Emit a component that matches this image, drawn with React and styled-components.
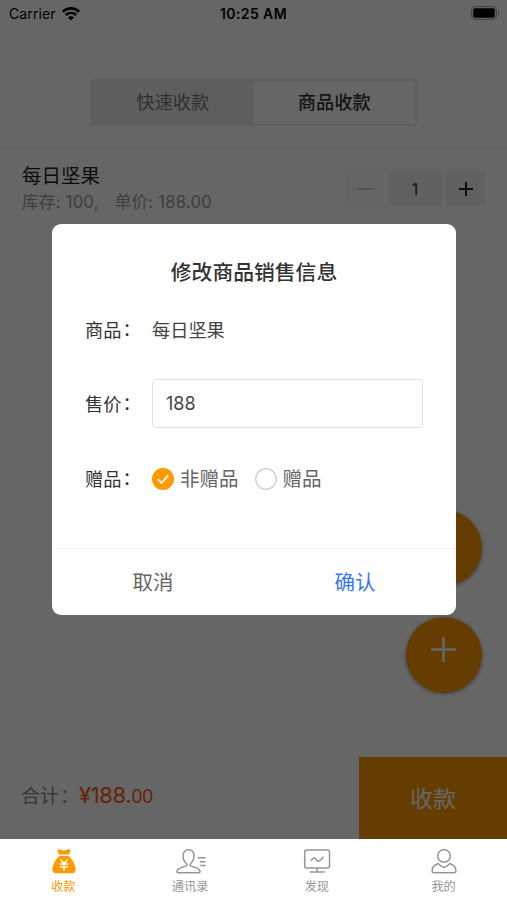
import React, { useState } from "react";
import styled, { createGlobalStyle } from "styled-components";

const GlobalStyle = createGlobalStyle`
  * {
    box-sizing: border-box;
  }

  body {
    margin: 0;
    font-family: Inter, "Noto Sans CJK SC", sans-serif;
    background-color: #ffffff;
  }

  button,
  input {
    font-family: inherit;
    margin: 0;
    padding: 0;
    border: none;
    background: none;
  }
`;

const Screen = styled.div`
  display: flex;
  flex-direction: column;
  width: 507px;
  height: 900px;
  overflow: hidden;
`;

const Page = styled.div`
  position: relative;
  display: flex;
  flex-direction: column;
  height: 839px;
`;

const StatusBar = styled.div`
  display: grid;
  grid-template-columns: 1fr auto 1fr;
  align-items: center;
  height: 28px;
  padding: 0 7px 0 9px;
  font-size: 14px;
  line-height: 28px;
  color: #000000;
`;

const Carrier = styled.div`
  display: flex;
  align-items: center;
  gap: 6px;
  letter-spacing: 0.1px;
`;

const Time = styled.div`
  margin-left: -2px;
  font-weight: 600;
  letter-spacing: 0.4px;
`;

const BatteryIcon = styled.svg`
  justify-self: end;
  margin-top: -2px;
`;

const Header = styled.div`
  display: flex;
  justify-content: center;
  height: 120px;
  padding-top: 51px;
  border-bottom: 1px solid #f5f5f5;
`;

const Segment = styled.div`
  display: flex;
  width: 327px;
  height: 47px;
  padding: 2px;
  background-color: #ebebeb;
  border-radius: 3px;
`;

const SegmentItem = styled.button`
  flex: 1;
  height: 43px;
  border-radius: 3px;
  font-size: 18.3px;
  line-height: 41px;
  color: ${(props) => (props.$active ? "#333333" : "#777777")};
  font-weight: ${(props) => (props.$active ? 500 : 400)};
  background-color: ${(props) => (props.$active ? "#ffffff" : "transparent")};
`;

const ProductRow = styled.div`
  display: flex;
  justify-content: space-between;
  align-items: center;
  height: 83px;
  padding: 0 22px;
  border-bottom: 1px solid #f9f9f9;
`;

const ProductName = styled.div`
  font-size: 19.5px;
  line-height: 27px;
  color: #222222;
`;

const ProductMeta = styled.div`
  display: flex;
  gap: 16px;
  font-size: 16.6px;
  line-height: 25px;
  letter-spacing: 0.25px;
  color: #999999;
`;

const Stepper = styled.div`
  display: flex;
  gap: 4px;
`;

const StepCell = styled.div`
  display: flex;
  align-items: center;
  justify-content: center;
  width: ${(props) => props.$width}px;
  height: 34px;
  border-radius: 2px;
  font-size: 16px;
  color: #333333;
  background-color: ${(props) => (props.$disabled ? "#fafafa" : "#f3f3f3")};
`;

const FloatingButtons = styled.div`
  position: absolute;
  right: 25px;
  top: 510px;
  display: flex;
  flex-direction: column;
  gap: 31px;
`;

const RoundButton = styled.button`
  width: 76px;
  height: 76px;
  padding: 0 2px 8px 0;
  border-radius: 50%;
  background-color: #ff9900;
  box-shadow: 0 1px 4px rgba(0, 0, 0, 0.4);
`;

const CheckoutBar = styled.div`
  display: flex;
  justify-content: space-between;
  height: 82px;
  margin-top: auto;
`;

const Total = styled.div`
  display: flex;
  align-items: baseline;
  padding-left: 21px;
  font-size: 19px;
  line-height: 77px;
  color: #888888;
`;

const Amount = styled.span`
  margin-left: 1px;
  font-size: 22px;
  letter-spacing: -0.4px;
  color: #ff5511;

  small {
    font-size: 18px;
  }
`;

const PayButton = styled.button`
  width: 148px;
  padding-bottom: 2px;
  font-size: 23px;
  color: #ffffff;
  background-color: #ff9900;
`;

const Overlay = styled.div`
  position: absolute;
  inset: 0;
  display: flex;
  align-items: center;
  justify-content: center;
  padding-left: 1px;
  background-color: rgba(0, 0, 0, 0.6);
`;

const Modal = styled.div`
  display: flex;
  flex-direction: column;
  width: 404px;
  height: 391px;
  border-radius: 9px;
  background-color: #ffffff;
`;

const ModalTitle = styled.div`
  margin-top: 33px;
  text-align: center;
  font-size: 20.8px;
  font-weight: 500;
  line-height: 32px;
  color: #333333;
`;

const FormRow = styled.div`
  display: flex;
  align-items: center;
  height: ${(props) => props.$height}px;
  padding: 0 33px;
`;

const Label = styled.div`
  display: flex;
  width: 67px;
  font-size: 18.2px;
  line-height: 28px;
  color: #333333;
  white-space: nowrap;
`;

const Colon = styled.span`
  margin: -1px -1px 0 1px;
`;

const Value = styled.div`
  font-size: 18.2px;
  line-height: 28px;
  color: #444444;
`;

const PriceInput = styled.input`
  flex: 1;
  min-width: 0;
  height: 49px;
  padding: 0 13px;
  border: 1.5px solid #e2e2e2;
  border-radius: 4px;
  font-size: 18px;
  color: #444444;
  outline: none;
`;

const Option = styled.div`
  display: flex;
  align-items: center;
  gap: 6px;
  margin-right: 16px;
  font-size: 19.5px;
  line-height: 28px;
  color: #666666;
`;

const ModalFooter = styled.div`
  display: flex;
  height: 67px;
  margin-top: auto;
  border-top: 1px solid #f2f2f2;
`;

const FooterButton = styled.button`
  flex: 1;
  padding-top: 2px;
  font-size: 20.5px;
  line-height: 64px;
  color: ${(props) => (props.$primary ? "#3478f6" : "#666666")};
`;

const TabBar = styled.div`
  display: grid;
  grid-template-columns: repeat(4, 1fr);
  height: 61px;
  background-color: #ffffff;
`;

const Tab = styled.div`
  display: flex;
  flex-direction: column;
  align-items: center;
  padding-top: 9px;
  font-size: 12.2px;
  line-height: 23px;
  color: ${(props) => (props.$active ? "#ff9900" : "#949799")};
`;

const WifiIcon = () => (
  <svg width="18" height="14" viewBox="0 0 18 14" fill="none" stroke="#000">
    <path d="M0.8 4.7C5.4 0.3 12.6 0.3 17.2 4.7" strokeWidth="2.6" />
    <path d="M3.8 8C6.8 5.2 11.2 5.2 14.2 8" strokeWidth="2.4" />
    <path d="M9 13.4L6 10.4C7.7 8.9 10.3 8.9 12 10.4Z" fill="#000" stroke="none" />
  </svg>
);

const PlusIcon = ({ size, width, color }) => (
  <svg width={size} height={size} viewBox={`0 0 ${size} ${size}`}>
    <path
      d={`M0 ${size / 2}H${size}M${size / 2} 0V${size}`}
      stroke={color}
      strokeWidth={width}
    />
  </svg>
);

const RadioIcon = ({ checked }) => (
  <svg width="22" height="22" viewBox="0 0 22 22" fill="none">
    {checked ? (
      <>
        <circle cx="11" cy="11" r="11" fill="#ff9900" />
        <path d="M5.8 11.2L9.6 15L16.2 7.3" stroke="#fff" strokeWidth="1.8" />
      </>
    ) : (
      <circle cx="11" cy="11" r="10.3" stroke="#cfcfcf" strokeWidth="1.3" />
    )}
  </svg>
);

const tabs = [
  {
    name: "收款",
    icon: (
      <>
        <path
          d="M8.4 6.6C8 4.5 6.3 3.5 7 2.2C8 0.7 9.3 1.6 10.4 1.9C12.3 2.6 14.5 2.5 16.2 1.9C17.4 1.4 18.9 0.8 19.7 2.2C20.5 3.6 18.8 4.6 18.3 6.6Z"
          fill="currentColor"
          stroke="none"
        />
        <path
          d="M8.8 7.9H18.2C21.8 11.3 25 16.6 25 21.2C25 24 23.8 25.2 21.3 25.2H5.7C3.2 25.2 2 24 2 21.2C2 16.6 5.2 11.3 8.8 7.9Z"
          fill="currentColor"
          stroke="none"
        />
        <path
          d="M10.1 11.4L13.5 15.8L16.9 11.4M13.5 15.8V22.6M9.2 16H17.8M9.2 19H17.8"
          stroke="#fff"
          strokeWidth="1.5"
        />
      </>
    ),
  },
  {
    name: "通讯录",
    icon: (
      <path d="M10.5 17.3C10.5 16 9.6 15.2 8.5 14C7 12.3 6.5 10.2 6.5 8C6.5 4 8.8 1.8 12 1.8C15.2 1.8 17.5 4 17.5 8C17.5 10.2 17 12.3 15.5 14C14.4 15.2 13.5 16 13.5 17.3C15 19 18.5 18.8 21 20.3C22.7 21.3 23.6 22.4 23.6 23.6C23.6 24.5 23.2 24.7 22.4 24.7H1.6C0.8 24.7 0.4 24.5 0.4 23.6C0.4 22.4 1.3 21.3 3 20.3C5.5 18.8 9 19 10.5 17.3ZM21.2 9.8H29M23.2 13.7H29M23.8 17.5H29" />
    ),
  },
  {
    name: "发现",
    icon: (
      <>
        <rect x="1.2" y="2" width="24.8" height="18" rx="2" />
        <path d="M7.5 12.8C9.3 10.1 10.7 9.1 12.2 11C13.8 13.2 15.2 14.3 17.2 11.8L20 8.8M13.6 20V23.8M6.2 24H21.3" />
      </>
    ),
  },
  {
    name: "我的",
    icon: (
      <>
        <circle cx="13.5" cy="7.9" r="6.3" />
        <path d="M7.6 15.5C9.5 17.2 11.3 19.2 13.5 19.2C15.7 19.2 17.5 17.2 19.4 15.5C23 16.9 25.4 19.4 25.4 22.8C25.4 24.3 24.8 24.8 23.6 24.8H3.4C2.2 24.8 1.6 24.3 1.6 22.8C1.6 19.4 4 16.9 7.6 15.5Z" />
      </>
    ),
  },
];

function App() {
  const [mode, setMode] = useState("商品收款");
  const [price, setPrice] = useState("188");
  const [gift, setGift] = useState(false);
  const [showModal, setShowModal] = useState(true);

  return (
    <>
      <GlobalStyle />
      <Screen>
        <Page>
          <StatusBar>
            <Carrier>
              Carrier
              <WifiIcon />
            </Carrier>
            <Time>10:25 AM</Time>
            <BatteryIcon width="29" height="14" viewBox="0 0 29 14">
              <rect x="0.6" y="0.6" width="24.8" height="12.8" rx="3.6" fill="none" stroke="#999" />
              <rect x="2.2" y="2.2" width="21.6" height="9.6" rx="2" fill="#000" />
              <path d="M27 4.8Q29 7 27 9.2Z" fill="#888" />
            </BatteryIcon>
          </StatusBar>
          <Header>
            <Segment>
              {["快速收款", "商品收款"].map((item) => (
                <SegmentItem
                  key={item}
                  $active={item === mode}
                  onClick={() => setMode(item)}
                >
                  {item}
                </SegmentItem>
              ))}
            </Segment>
          </Header>
          <ProductRow>
            <div>
              <ProductName>每日坚果</ProductName>
              <ProductMeta>
                <span>库存: 100,</span>
                <span>单价: 188.00</span>
              </ProductMeta>
            </div>
            <Stepper>
              <StepCell $width={39} $disabled>
                <svg width="16" height="2">
                  <path d="M0 1H16" stroke="#bbb" strokeWidth="1.5" />
                </svg>
              </StepCell>
              <StepCell $width={54}>1</StepCell>
              <StepCell $width={39}>
                <PlusIcon size={14} width={2} color="#222" />
              </StepCell>
            </Stepper>
          </ProductRow>
          <FloatingButtons>
            <RoundButton onClick={() => setShowModal(true)} />
            <RoundButton>
              <PlusIcon size={25} width={2.6} color="#fff" />
            </RoundButton>
          </FloatingButtons>
          <CheckoutBar>
            <Total>
              合计<Colon>：</Colon>
              <Amount>
                ¥188.<small>00</small>
              </Amount>
            </Total>
            <PayButton>收款</PayButton>
          </CheckoutBar>

          {showModal && (
            <Overlay>
              <Modal>
                <ModalTitle>修改商品销售信息</ModalTitle>
                <FormRow $height={81}>
                  <Label>
                    商品<Colon>：</Colon>
                  </Label>
                  <Value>每日坚果</Value>
                </FormRow>
                <FormRow $height={67}>
                  <Label>
                    售价<Colon>：</Colon>
                  </Label>
                  <PriceInput
                    value={price}
                    onChange={(e) => setPrice(e.target.value)}
                  />
                </FormRow>
                <FormRow $height={83}>
                  <Label>
                    赠品<Colon>：</Colon>
                  </Label>
                  <Option onClick={() => setGift(false)}>
                    <RadioIcon checked={!gift} />
                    非赠品
                  </Option>
                  <Option onClick={() => setGift(true)}>
                    <RadioIcon checked={gift} />
                    赠品
                  </Option>
                </FormRow>
                <ModalFooter>
                  <FooterButton onClick={() => setShowModal(false)}>取消</FooterButton>
                  <FooterButton $primary onClick={() => setShowModal(false)}>
                    确认
                  </FooterButton>
                </ModalFooter>
              </Modal>
            </Overlay>
          )}
        </Page>
        <TabBar>
          {tabs.map((tab, index) => (
            <Tab key={tab.name} $active={index === 0}>
              <svg
                width="30"
                height="27"
                viewBox={index === 0 ? "-2.5 0 30 27" : "-1.5 0 30 27"}
                fill="none"
                stroke="currentColor"
                strokeWidth="1.5"
                strokeLinejoin="round"
                overflow="visible"
              >
                {tab.icon}
              </svg>
              {tab.name}
            </Tab>
          ))}
        </TabBar>
      </Screen>
    </>
  );
}

export default App;
